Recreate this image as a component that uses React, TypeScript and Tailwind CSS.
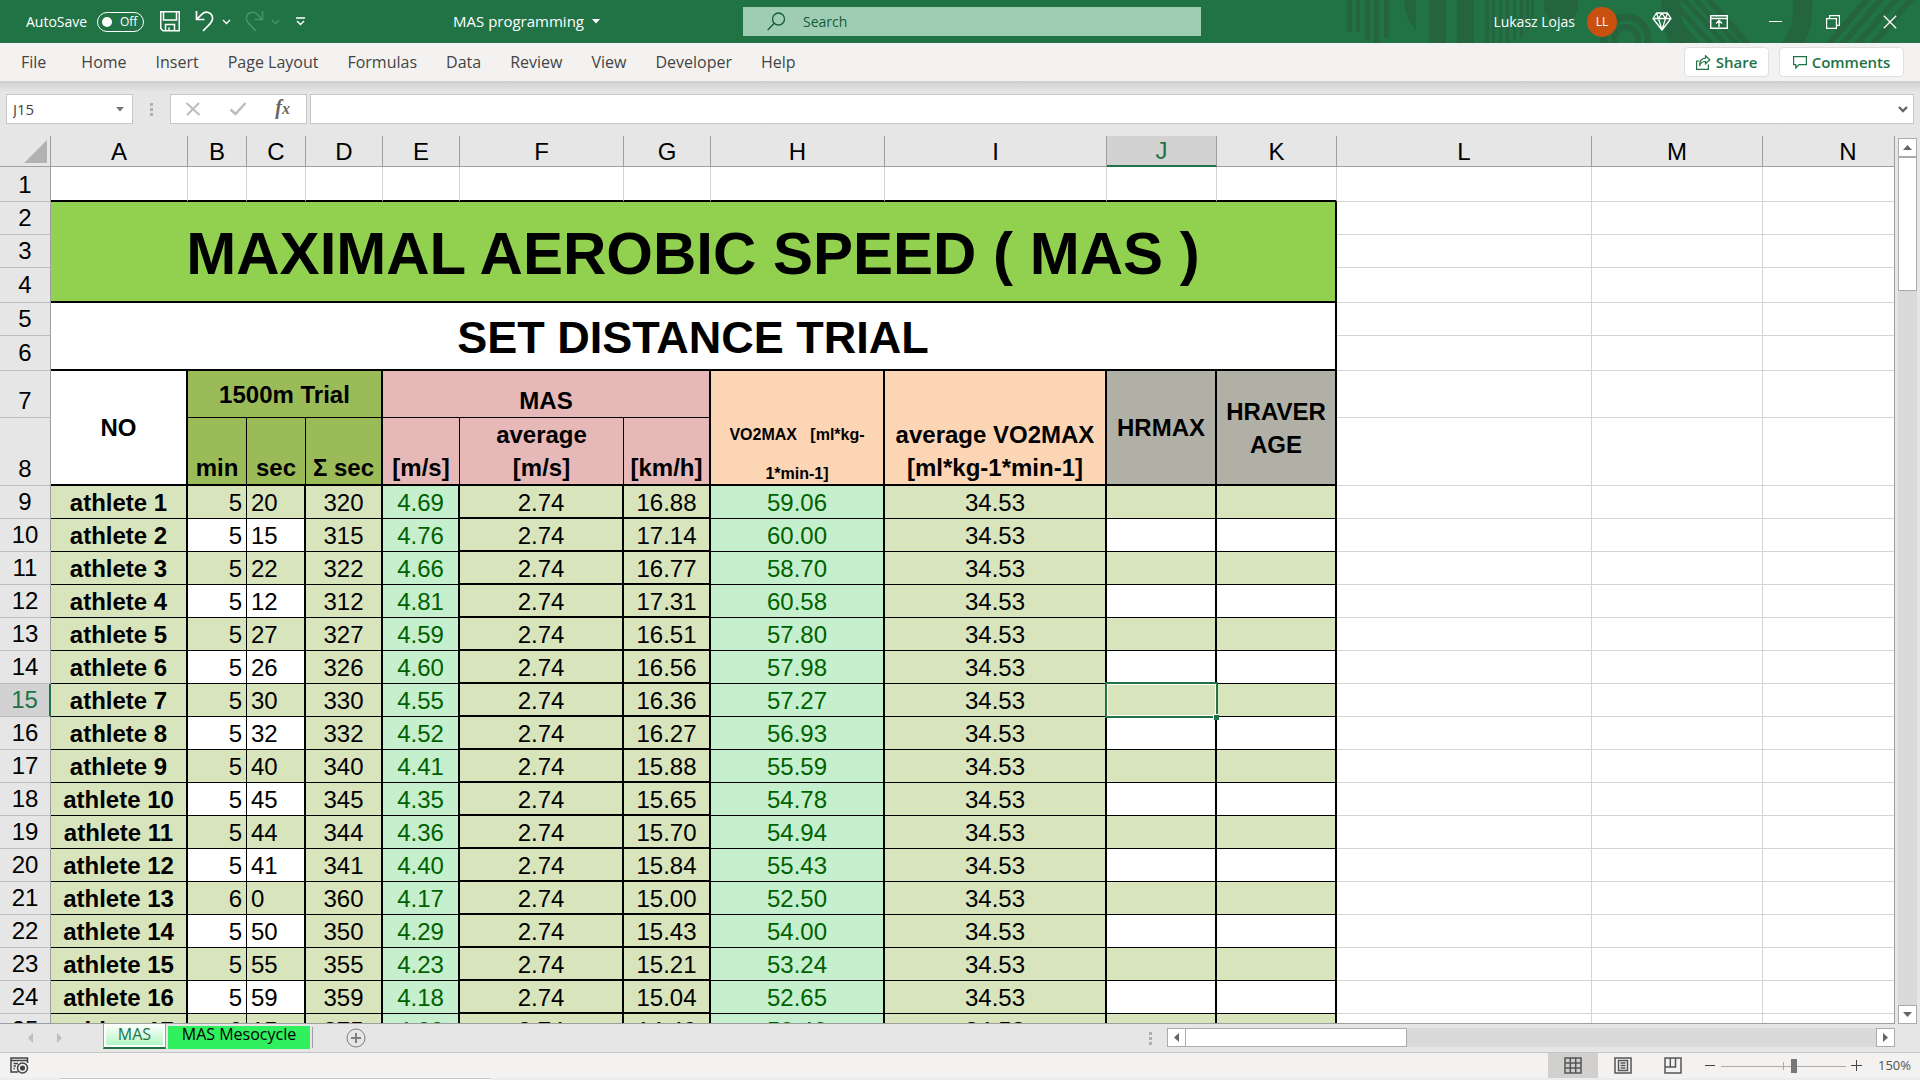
import React from "react";

type Row = { name: string; min: number; sec: number; ms: string; kmh: string; vo2: string };

const athletes: Row[] = [
  { name: "athlete 1", min: 5, sec: 20, ms: "4.69", kmh: "16.88", vo2: "59.06" },
  { name: "athlete 2", min: 5, sec: 15, ms: "4.76", kmh: "17.14", vo2: "60.00" },
  { name: "athlete 3", min: 5, sec: 22, ms: "4.66", kmh: "16.77", vo2: "58.70" },
  { name: "athlete 4", min: 5, sec: 12, ms: "4.81", kmh: "17.31", vo2: "60.58" },
  { name: "athlete 5", min: 5, sec: 27, ms: "4.59", kmh: "16.51", vo2: "57.80" },
  { name: "athlete 6", min: 5, sec: 26, ms: "4.60", kmh: "16.56", vo2: "57.98" },
  { name: "athlete 7", min: 5, sec: 30, ms: "4.55", kmh: "16.36", vo2: "57.27" },
  { name: "athlete 8", min: 5, sec: 32, ms: "4.52", kmh: "16.27", vo2: "56.93" },
  { name: "athlete 9", min: 5, sec: 40, ms: "4.41", kmh: "15.88", vo2: "55.59" },
  { name: "athlete 10", min: 5, sec: 45, ms: "4.35", kmh: "15.65", vo2: "54.78" },
  { name: "athlete 11", min: 5, sec: 44, ms: "4.36", kmh: "15.70", vo2: "54.94" },
  { name: "athlete 12", min: 5, sec: 41, ms: "4.40", kmh: "15.84", vo2: "55.43" },
  { name: "athlete 13", min: 6, sec: 0, ms: "4.17", kmh: "15.00", vo2: "52.50" },
  { name: "athlete 14", min: 5, sec: 50, ms: "4.29", kmh: "15.43", vo2: "54.00" },
  { name: "athlete 15", min: 5, sec: 55, ms: "4.23", kmh: "15.21", vo2: "53.24" },
  { name: "athlete 16", min: 5, sec: 59, ms: "4.18", kmh: "15.04", vo2: "52.65" },
  { name: "athlete 17", min: 6, sec: 15, ms: "4.00", kmh: "14.40", vo2: "50.40" },
];

const columns = ["A", "B", "C", "D", "E", "F", "G", "H", "I", "J", "K", "L", "M", "N"];
const menus = ["File", "Home", "Insert", "Page Layout", "Formulas", "Data", "Review", "View", "Developer", "Help"];

function TitlePattern() {
  return (
    <svg className="absolute right-0 top-0 h-[43px] w-[590px]" viewBox="0 0 590 43" fill="#24643f" aria-hidden="true">
      <rect x="17" width="5" height="32" />
      <rect x="26" width="4" height="32" />
      <rect x="35" width="5" height="41" />
      <rect x="44" width="5" height="43" />
      <rect x="54" width="5" height="38" />
      <path d="M74 0H86V31Q75 18 74 0Z" />
      <rect x="99" width="17" height="43" />
      <rect x="127" width="17" height="43" />
      <rect x="155" width="4" height="43" />
      <rect x="162" width="3" height="43" />
      <rect x="169" width="3" height="43" />
      <rect x="176" width="3" height="43" />
      <rect x="183" width="3" height="40" />
      <rect x="190" width="3" height="37" />
      <rect x="196" width="3" height="30" />
      <rect x="201" width="3" height="18" />
      <circle cx="231" cy="6" r="17" />
      <circle cx="296" cy="39" r="22" fill="none" stroke="#24643f" strokeWidth="7" />
      <circle cx="296" cy="39" r="12" fill="none" stroke="#24643f" strokeWidth="6" />
      <circle cx="407" cy="8" r="66" fill="none" stroke="#24643f" strokeWidth="19" />
      <g stroke="#24643f" strokeWidth="5">
        <path d="M350 9L384 47M350 24L370 47M350 -5L398 47M358 -8L410 47" />
      </g>
      <path d="M372 -4H379L421 43H412Z" />
      <g stroke="#24643f" strokeWidth="6">
        <path d="M496 47L540 -4M510 47L554 -4M525 47L569 -4M540 47L584 -4" />
      </g>
    </svg>
  );
}

function Chevron({ className }: { className?: string }) {
  return (
    <svg className={className} width="9" height="6" viewBox="0 0 9 6" fill="none" stroke="currentColor" strokeWidth="1.4" aria-hidden="true">
      <path d="M1 1L4.500 4.500L8 1" />
    </svg>
  );
}

function TitleBar() {
  return (
    <header className="relative flex h-[43px] shrink-0 items-center bg-[#217346] text-white">
      <TitlePattern />
      <div className="relative flex w-0 flex-1 items-center pl-[26px] text-[15px]">
        <label htmlFor="autosave" className="w-[62px] whitespace-nowrap text-sm">AutoSave</label>
        <button id="autosave" role="switch" aria-checked="false" className="ml-[9px] flex h-5 w-[47px] items-center gap-2 rounded-full border border-white pl-1 text-xs">
          <span className="h-[10px] w-[10px] rounded-full bg-white" />
          Off
        </button>
        <button aria-label="Save" className="ml-4">
          <svg width="20" height="21" viewBox="0 0 20 21" fill="none" stroke="white" strokeWidth="1.500">
            <path d="M.75 .75H19.250V19.750H3L.75 17.500ZM3.500 .75V9H16.500V.75M5.500 19.750V13.500H14.500V19.750M9 19.500V16.500M9 17H9.500" />
          </svg>
        </button>
        <button aria-label="Undo" className="ml-[15px]">
          <svg width="20" height="21" viewBox="0 0 20 21" fill="none" stroke="white" strokeWidth="1.700">
            <path d="M1.500 0V8.500H9.500M1.500 8.500L7 3.200C11-1 18 2 17.500 8C17.300 11 15 13 8 20" />
          </svg>
        </button>
        <button aria-label="Undo history" className="ml-[7px]"><Chevron /></button>
        <button aria-label="Redo" className="ml-[13px] text-[#4e9069]" disabled>
          <svg width="20" height="21" viewBox="0 0 20 21" fill="none" stroke="currentColor" strokeWidth="1.500">
            <path d="M18.500 0V8.500H10.500M18.500 8.500L13 3.200C9-1 2 2 2.500 8C2.700 11 5 13 12 20" />
          </svg>
        </button>
        <button aria-label="Redo history" className="ml-[7px] text-[#4e9069]" disabled><Chevron /></button>
        <button aria-label="Customize toolbar" className="ml-[15px]">
          <svg width="11" height="9" viewBox="0 0 11 9" fill="none" stroke="white" strokeWidth="1.400">
            <path d="M1 1H10M2 4L5.500 7.500L9 4" />
          </svg>
        </button>
        <button className="ml-auto mr-[143px] flex items-center gap-2 whitespace-nowrap text-[15px]">
          MAS programming
          <svg width="8" height="5" viewBox="0 0 8 5" fill="white"><path d="M0 0H8L4 4.500Z" /></svg>
        </button>
      </div>
      <label className="relative flex h-[29px] w-[458px] items-center gap-[17px] bg-[#9fcdb3] pl-6 text-[#185c37]">
        <svg width="19" height="19" viewBox="0 0 19 19" fill="none" stroke="currentColor" strokeWidth="1.300" aria-hidden="true">
          <circle cx="11.500" cy="7" r="6" />
          <path d="M7.300 11.300L.7 18" />
        </svg>
        <input aria-label="Search" placeholder="Search" className="w-0 flex-1 bg-transparent text-sm outline-none placeholder:text-[#185c37]" />
      </label>
      <div className="relative flex h-full w-0 flex-1 items-center justify-end pr-[2px]">
        <button className="flex items-center gap-3 whitespace-nowrap text-sm">
          Lukasz Lojas
          <span className="flex h-[30px] w-[30px] items-center justify-center rounded-full bg-[#ca5010] text-xs">LL</span>
        </button>
        <button aria-label="Premium" className="ml-4 flex h-full w-[57px] items-center justify-center">
          <svg width="20" height="19" viewBox="0 0 20 19" fill="none" stroke="white" strokeWidth="1.300" strokeLinejoin="round">
            <path d="M4.500 1H15.500L19 6.500L10 18L1 6.500ZM1 6.500H19M6.500 6.500L10 18L13.500 6.500M4.500 1L6.500 6.500L10 1L13.500 6.500L15.500 1" />
          </svg>
        </button>
        <button aria-label="Ribbon display options" className="flex h-full w-[57px] items-center justify-center">
          <svg width="18" height="14" viewBox="0 0 18 14" fill="none" stroke="white" strokeWidth="1.400">
            <path d="M.7 .7H17.300V13.300H.7ZM.7 3.500H17.300M9 12V6M6 8.500L9 5.500L12 8.500" />
          </svg>
        </button>
        <button aria-label="Minimize" className="flex h-full w-[57px] items-center justify-center">
          <span className="h-px w-[13px] bg-white" />
        </button>
        <button aria-label="Restore" className="flex h-full w-[57px] items-center justify-center">
          <svg width="14" height="14" viewBox="0 0 14 14" fill="none" stroke="white" strokeWidth="1.200">
            <path d="M.6 3.600H10.400V13.400H.6ZM3.600 3.600V.6H13.400V10.400H10.400" />
          </svg>
        </button>
        <button aria-label="Close" className="flex h-full w-[57px] items-center justify-center">
          <svg width="14" height="14" viewBox="0 0 14 14" fill="none" stroke="white" strokeWidth="1.300">
            <path d="M.8 .8L13.200 13.200M13.200 .8L.8 13.200" />
          </svg>
        </button>
      </div>
    </header>
  );
}

function Ribbon() {
  return (
    <nav className="flex h-[38px] shrink-0 items-center bg-[#f3f2f1] pl-[7px] pr-4 text-base text-[#444444]">
      {menus.map((m) => (
        <button key={m} className={m === "File" ? "mr-[6px] whitespace-nowrap pl-[14px] pr-[15px]" : "whitespace-nowrap pl-[14px] pr-[15px]"}>{m}</button>
      ))}
      <button className="ml-auto flex h-[30px] w-[85px] items-center justify-center gap-[5px] rounded-sm border border-[#e1dfdd] bg-white text-[15px] font-semibold text-[#217346]">
        <svg width="15" height="15" viewBox="0 0 15 15" fill="none" stroke="currentColor" strokeWidth="1.200" aria-hidden="true">
          <path d="M3.500 6H.6V14.400H12.400V9.500M9.500 .8L13.800 4.800L9.500 8.800V6.500C6.500 6.500 4.500 8 3.500 11C3.500 6.500 5.500 3.500 9.500 3.200Z" />
        </svg>
        Share
      </button>
      <button className="ml-[10px] flex h-[30px] w-[125px] items-center justify-center gap-[5px] rounded-sm border border-[#e1dfdd] bg-white text-[15px] font-semibold text-[#217346]">
        <svg width="14" height="13" viewBox="0 0 14 13" fill="none" stroke="currentColor" strokeWidth="1.200" aria-hidden="true">
          <path d="M.6 .6H13.400V8.600H6L2.800 12V8.600H.6Z" />
        </svg>
        Comments
      </button>
    </nav>
  );
}

function Grip() {
  return (
    <span className="flex flex-col gap-[2px]" aria-hidden="true">
      <span className="h-[3px] w-[3px] bg-[#b0b0b0]" />
      <span className="h-[3px] w-[3px] bg-[#b0b0b0]" />
      <span className="h-[3px] w-[3px] bg-[#b0b0b0]" />
    </span>
  );
}

function FormulaBar() {
  return (
    <div className="flex h-[55px] shrink-0 items-start bg-linear-to-b from-[#cfcfcf] to-[#e6e6e6] to-20% pl-[6px] pr-[6px] pt-[13px]">
      <div className="flex h-[30px] w-[127px] items-center border border-[#c6c6c6] bg-white pr-2">
        <input aria-label="Name box" defaultValue="J15" className="w-0 flex-1 pl-[6px] text-[15px] text-[#444444] outline-none" />
        <svg width="8" height="5" viewBox="0 0 8 5" fill="#777777"><path d="M0 0H8L4 4.500Z" /></svg>
      </div>
      <div className="flex h-[30px] w-[37px] items-center justify-center"><Grip /></div>
      <div className="flex h-[30px] w-[137px] items-center justify-between border border-[#c6c6c6] bg-white pl-[14px] pr-4">
        <button aria-label="Cancel">
          <svg width="16" height="14" viewBox="0 0 16 14" fill="none" stroke="#bdbdbd" strokeWidth="2"><path d="M1.500 1L14.500 13M14 1L2 13" /></svg>
        </button>
        <button aria-label="Enter">
          <svg width="18" height="14" viewBox="0 0 18 14" fill="none" stroke="#bdbdbd" strokeWidth="2.600"><path d="M1.500 7.500L6.500 12L16.500 1" /></svg>
        </button>
        <button aria-label="Insert function" className="font-['Liberation_Serif',serif] text-xl font-bold italic leading-5 text-[#666666]">
          f<span className="text-base">x</span>
        </button>
      </div>
      <div className="ml-[3px] flex h-[30px] flex-1 items-center border border-[#c6c6c6] bg-white pr-[5px]">
        <input aria-label="Formula" className="h-full w-0 flex-1 px-2 text-sm outline-none" />
        <button aria-label="Expand formula bar" className="text-[#666666]">
          <svg width="10" height="7" viewBox="0 0 10 7" fill="none" stroke="currentColor" strokeWidth="2.400"><path d="M1 1L5 5L9 1" /></svg>
        </button>
      </div>
    </div>
  );
}

const blank = "border-b border-r border-[#d4d4d4] bg-white";

function RowHead({ n, active, low }: { n: number; active?: boolean; low?: boolean }) {
  return (
    <th
      scope="row"
      className={
        active
          ? "border-b border-r-2 border-b-[#bdbdbd] border-r-[#217346] bg-[#d2d2d2] font-normal leading-[30px] text-[#217346]"
          : low
            ? "border-b border-r border-b-[#bdbdbd] border-r-[#9f9f9f] bg-[#e6e6e6] pb-px align-bottom font-normal leading-[30px]"
            : "border-b border-r border-b-[#bdbdbd] border-r-[#9f9f9f] bg-[#e6e6e6] font-normal leading-[30px]"
      }
    >
      {n}
    </th>
  );
}

function Blanks() {
  return (
    <>
      <td className={blank} />
      <td className={blank} />
      <td className={blank} />
    </>
  );
}

function Sheet() {
  return (
    <div className="min-w-0 flex-1 overflow-hidden border-b border-r border-[#9f9f9f] bg-white">
      <table className="w-[1934px] table-fixed border-separate border-spacing-0 text-center font-['Liberation_Sans',Arial,sans-serif] text-2xl text-black">
        <colgroup>
          <col className="w-[51px]" />
          <col className="w-[137px]" />
          <col className="w-[59px]" />
          <col className="w-[59px]" />
          <col className="w-[77px]" />
          <col className="w-[77px]" />
          <col className="w-[164px]" />
          <col className="w-[87px]" />
          <col className="w-[174px]" />
          <col className="w-[222px]" />
          <col className="w-[110px]" />
          <col className="w-[120px]" />
          <col className="w-[255px]" />
          <col className="w-[171px]" />
          <col className="w-[171px]" />
        </colgroup>
        <thead>
          <tr className="h-[31px] leading-7">
            <td className="border-b border-r border-[#9f9f9f] bg-[#e6e6e6]">
              <button aria-label="Select all" className="ml-auto mr-[3px] block">
                <svg className="block" width="23" height="23" viewBox="0 0 23 23" fill="#b2b2b2"><path d="M23 0V23H0Z" /></svg>
              </button>
            </td>
            {columns.map((c) => (
              <th
                key={c}
                scope="col"
                className={
                  c === "J"
                    ? "border-b-2 border-r border-b-[#217346] border-r-[#9f9f9f] bg-[#d2d2d2] pt-px font-normal text-[#217346]"
                    : "border-b border-r border-[#9f9f9f] bg-[#e6e6e6] pt-[2px] font-normal"
                }
              >
                {c}
              </th>
            ))}
          </tr>
        </thead>
        <tbody>
          <tr className="h-[35px]">
            <RowHead n={1} low />
            {columns.slice(0, 11).map((c) => (
              <td key={c} className="border-b-2 border-r border-b-black border-r-[#d4d4d4]" />
            ))}
            <Blanks />
          </tr>
          <tr className="h-[33px]">
            <RowHead n={2} />
            <td colSpan={11} rowSpan={3} className="border-b-2 border-r-2 border-black bg-[#92d050] pt-1 text-[60px] font-bold leading-[60px]">
              MAXIMAL AEROBIC SPEED ( MAS )
            </td>
            <Blanks />
          </tr>
          <tr className="h-[33px]"><RowHead n={3} /><Blanks /></tr>
          <tr className="h-[35px]"><RowHead n={4} /><Blanks /></tr>
          <tr className="h-[33px]">
            <RowHead n={5} />
            <td colSpan={11} rowSpan={2} className="border-b-2 border-r-2 border-black pt-1 text-[45px] font-bold leading-[48px]">
              SET DISTANCE TRIAL
            </td>
            <Blanks />
          </tr>
          <tr className="h-[35px]"><RowHead n={6} /><Blanks /></tr>
          <tr className="h-[47px] font-bold leading-[33px]">
            <RowHead n={7} low />
            <td rowSpan={2} className="border-b-2 border-r-2 border-black">NO</td>
            <td colSpan={3} className="border-b border-r-2 border-black bg-[#9bbb59]">1500m Trial</td>
            <td colSpan={3} className="border-b border-r-2 border-black bg-[#e6b8b7] align-bottom">MAS</td>
            <td rowSpan={2} className="border-b-2 border-r-2 border-black bg-[#fcd5b4] align-bottom text-base leading-5">
              <span className="flex flex-col gap-[19px]">
                <span className="whitespace-pre">VO2MAX   [ml*kg-</span>
                <span>1*min-1]</span>
              </span>
            </td>
            <td rowSpan={2} className="whitespace-nowrap border-b-2 border-r-2 border-black bg-[#fcd5b4] align-bottom">
              average VO2MAX<br />[ml*kg-1*min-1]
            </td>
            <td rowSpan={2} className="border-b-2 border-r-2 border-black bg-[#b1b0a7]">HRMAX</td>
            <td rowSpan={2} className="border-b-2 border-r-2 border-black bg-[#b1b0a7]">HRAVER<br />AGE</td>
            <Blanks />
          </tr>
          <tr className="h-[68px] align-bottom font-bold leading-[33px]">
            <RowHead n={8} low />
            <td className="border-b-2 border-r border-black bg-[#9bbb59]">min</td>
            <td className="border-b-2 border-r border-black bg-[#9bbb59]">sec</td>
            <td className="whitespace-nowrap border-b-2 border-r-2 border-black bg-[#9bbb59]">Σ sec</td>
            <td className="border-b-2 border-r border-black bg-[#e6b8b7]">[m/s]</td>
            <td className="border-b-2 border-r border-black bg-[#e6b8b7]">average<br />[m/s]</td>
            <td className="whitespace-nowrap border-b-2 border-r-2 border-black bg-[#e6b8b7]">[km/h]</td>
            <Blanks />
          </tr>
          {athletes.map((a, i) => {
            const band = i % 2 === 0 ? "bg-[#d8e4bc]" : "bg-white";
            return (
              <tr key={a.name} className="h-[33px] leading-[31px]">
                <RowHead n={i + 9} active={i === 6} />
                <td className="whitespace-nowrap border-b border-r-2 border-black bg-[#d8e4bc] font-bold">{a.name}</td>
                <td className={`border-b border-r border-black pr-1 text-right ${band}`}>{a.min}</td>
                <td className={`border-b border-r-2 border-black pl-1 text-left ${band}`}>{a.sec}</td>
                <td className="border-b border-r-2 border-black bg-[#d8e4bc]">{a.min * 60 + a.sec}</td>
                <td className="border-b border-r-2 border-black bg-[#c6efce] text-[#006100]">{a.ms}</td>
                <td className="border-b-2 border-r-2 border-black bg-[#d8e4bc] pt-[2px] leading-[29px]">2.74</td>
                <td className="border-b-2 border-r-2 border-black bg-[#d8e4bc] pt-[2px] leading-[29px]">{a.kmh}</td>
                <td className="border-b border-r-2 border-black bg-[#c6efce] text-[#006100]">{a.vo2}</td>
                <td className="border-b border-r-2 border-black bg-[#d8e4bc]">34.53</td>
                <td className={`relative border-b border-r-2 border-black ${band}`}>
                  {i === 6 && (
                    <span className="absolute -bottom-[2px] -left-[2px] -right-[3px] -top-[2px] z-10 border-2 border-[#217346]">
                      <span className="absolute inset-0 border border-white" />
                      <span className="absolute -bottom-[4px] -right-[3px] h-[6px] w-[6px] border-l border-t border-white bg-[#217346]" />
                    </span>
                  )}
                </td>
                <td className={`border-b border-r-2 border-black ${band}`} />
                <Blanks />
              </tr>
            );
          })}
        </tbody>
      </table>
    </div>
  );
}

const scrollBtn = "flex shrink-0 items-center justify-center border border-[#ababab] bg-white";

function VerticalScroll() {
  return (
    <div className="flex w-[25px] shrink-0 flex-col items-center pt-[2px]">
      <button aria-label="Scroll up" className={`${scrollBtn} h-[19px] w-[19px]`}>
        <svg width="9" height="5" viewBox="0 0 9 5" fill="#666666"><path d="M4.500 0L9 5H0Z" /></svg>
      </button>
      <div className="flex w-[19px] flex-1 flex-col bg-[#dadada]">
        <div className="h-[134px] border border-[#ababab] bg-white" />
      </div>
      <button aria-label="Scroll down" className={`${scrollBtn} h-[19px] w-[19px]`}>
        <svg width="9" height="5" viewBox="0 0 9 5" fill="#666666"><path d="M4.500 5L9 0H0Z" /></svg>
      </button>
    </div>
  );
}

function SheetTabs() {
  return (
    <div className="flex h-7 shrink-0 items-start bg-[#e6e6e6] pr-[25px] text-base">
      <div className="flex h-7 w-[103px] items-center gap-6 pl-7">
        <button aria-label="Previous sheet">
          <svg width="5" height="10" viewBox="0 0 5 10" fill="#bdbdbd"><path d="M5 0V10L0 5Z" /></svg>
        </button>
        <button aria-label="Next sheet">
          <svg width="5" height="10" viewBox="0 0 5 10" fill="#bdbdbd"><path d="M0 0V10L5 5Z" /></svg>
        </button>
      </div>
      <button className="h-[25px] w-[63px] border-b-2 border-x border-x-[#9f9f9f] border-b-[#217346] bg-white px-[2px] pb-[2px] text-[#217346]">
        <span className="block h-full bg-linear-to-b from-white to-[#b4f5c6] leading-5">MAS</span>
      </button>
      <button className="ml-[2px] mt-[2px] h-[23px] w-[142px] whitespace-nowrap bg-[#30f060] leading-[17px] text-black">
        <span className="block h-full">MAS Mesocycle</span>
      </button>
      <span className="ml-[2px] mt-[3px] h-[21px] w-px bg-[#9f9f9f]" />
      <button aria-label="New sheet" className="ml-[33px] mt-1">
        <svg width="20" height="20" viewBox="0 0 20 20" fill="none" stroke="#808080"><circle cx="10" cy="10" r="9" /><path strokeWidth="2" d="M5 10H15M10 5V15" /></svg>
      </button>
      <div className="ml-auto mr-[15px] flex h-7 items-center"><Grip /></div>
      <div className="mt-1 flex h-[19px] w-[728px] bg-[#dadada]">
        <button aria-label="Scroll left" className={`${scrollBtn} w-[19px]`}>
          <svg width="5" height="9" viewBox="0 0 5 9" fill="#666666"><path d="M5 0V9L0 4.500Z" /></svg>
        </button>
        <div className="w-[221px] border border-l-0 border-[#ababab] bg-white" />
        <button aria-label="Scroll right" className={`${scrollBtn} ml-auto w-[19px]`}>
          <svg width="5" height="9" viewBox="0 0 5 9" fill="#666666"><path d="M0 0V9L5 4.500Z" /></svg>
        </button>
      </div>
    </div>
  );
}

function StatusBar() {
  return (
    <footer className="flex h-[26px] shrink-0 items-center border-t border-[#c6c6c6] bg-[#f3f2f1] pl-[10px] pr-[10px] text-[#555555]">
      <button aria-label="Record macro">
        <svg width="19" height="17" viewBox="0 0 19 17" fill="none" stroke="#444444" strokeWidth="1.500">
          <path d="M8 15H1V1H17.500V6M1 3.500H17.500M3.500 6.500H8M3.500 9H6M3.500 11.500H5" />
          <circle cx="12.500" cy="11" r="5" />
          <circle cx="12.500" cy="11" r="1.800" fill="#444444" />
        </svg>
      </button>
      <button aria-label="Normal view" className="ml-auto flex h-full w-[50px] items-center justify-center bg-[#d2d0ce]">
        <svg width="18" height="17" viewBox="0 0 18 17" fill="none" stroke="#555555" strokeWidth="1.500"><path d="M1 1H17V16H1ZM6.300 1V16M11.700 1V16M1 6H17M1 11H17" /></svg>
      </button>
      <button aria-label="Page layout view" className="flex h-full w-[50px] items-center justify-center">
        <svg width="18" height="17" viewBox="0 0 18 17" fill="none" stroke="#555555" strokeWidth="1.500"><path d="M1 1H17V16H1ZM4.500 3.500H13.500V13.500H4.500ZM6.500 6H11.500M6.500 8.500H11.500M6.500 11H11.500" /></svg>
      </button>
      <button aria-label="Page break view" className="flex h-full w-[50px] items-center justify-center">
        <svg width="18" height="17" viewBox="0 0 18 17" fill="none" stroke="#555555" strokeWidth="1.500"><path d="M1 1H17V16H1ZM1 10H11.500V1M6.300 1V10" /></svg>
      </button>
      <button aria-label="Zoom out" className="ml-[7px] flex h-full w-[10px] items-center"><span className="h-px w-full bg-[#444444]" /></button>
      <div className="relative ml-[6px] flex h-4 w-[125px] items-center">
        <span className="absolute inset-x-0 top-2 h-px bg-[#ababab]" />
        <span className="absolute left-[62px] top-1 h-2 w-px bg-[#ababab]" />
        <input
          type="range"
          aria-label="Zoom"
          min={0}
          max={100}
          defaultValue={59}
          className="relative h-4 w-full appearance-none bg-transparent [&::-webkit-slider-thumb]:h-[14px] [&::-webkit-slider-thumb]:w-[6px] [&::-webkit-slider-thumb]:appearance-none [&::-webkit-slider-thumb]:bg-[#777777]"
        />
      </div>
      <button aria-label="Zoom in" className="ml-[5px]">
        <svg className="block" width="11" height="11" viewBox="0 0 11 11" stroke="#444444"><path d="M0 5.500H11M5.500 0V11" /></svg>
      </button>
      <span className="ml-4 w-8 whitespace-nowrap text-[13px]">150%</span>
    </footer>
  );
}

export default function App() {
  return (
    <div className="flex h-screen flex-col overflow-hidden bg-[#e6e6e6] font-['Open_Sans','Noto_Sans',sans-serif]">
      <TitleBar />
      <Ribbon />
      <FormulaBar />
      <main className="flex min-h-0 flex-1">
        <Sheet />
        <VerticalScroll />
      </main>
      <SheetTabs />
      <StatusBar />
      <div className="flex h-[2px] shrink-0 bg-[#ececec]">
        <span className="ml-[60px] w-[430px] border-t border-[#c6c6c6] bg-white" />
      </div>
    </div>
  );
}
